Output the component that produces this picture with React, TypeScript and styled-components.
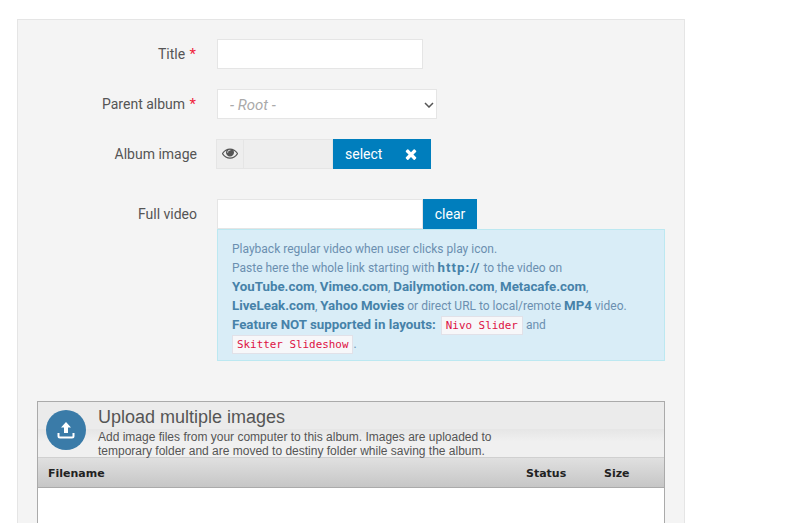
import React from "react";
import styled, { createGlobalStyle } from "styled-components";

const Global = createGlobalStyle`
  html, body {
    margin: 0;
    height: 523px;
    overflow: hidden;
    background: #fff;
  }
  body {
    font-family: Roboto, "Noto Sans", sans-serif;
    font-size: 14px;
    color: #555;
  }
`;

const Panel = styled.form`
  box-sizing: border-box;
  width: 668px;
  height: 504px;
  margin: 19px 0 0 17px;
  padding: 19px 19px 0;
  background: #f4f4f4;
  border: 1px solid #e5e5e5;
  border-bottom: 0;
  overflow: hidden;
`;

const Row = styled.div<{ $gap?: number }>`
  display: grid;
  grid-template-columns: 160px 1fr;
  column-gap: 20px;
  margin-bottom: ${({ $gap }) => $gap ?? 20}px;
`;

const Label = styled.label`
  text-align: right;
  line-height: 30px;
  color: #555;
  white-space: nowrap;
`;

const Required = styled.span`
  margin: 0 1px;
  color: #f0243c;
  font-size: 15px;
  line-height: 0;
`;

const TextInput = styled.input`
  box-sizing: border-box;
  display: block;
  width: 206px;
  height: 30px;
  padding: 0 12px;
  background: #fff;
  border: 1px solid #e5e5e5;
  border-radius: 0;
  outline: none;
`;

const Select = styled.select`
  appearance: none;
  box-sizing: border-box;
  display: block;
  width: 220px;
  height: 30px;
  padding: 1px 12px 0;
  background: #fff url("data:image/svg+xml,%3Csvg xmlns='http://www.w3.org/2000/svg' width='10' height='6'%3E%3Cpath d='M1 1l4 4 4-4' fill='none' stroke='%23555' stroke-width='1.5'/%3E%3C/svg%3E") no-repeat 206px 12px;
  border: 1px solid #e5e5e5;
  border-radius: 0;
  font: italic 15px Roboto, sans-serif;
  color: #aaa;
  outline: none;
`;

const ImageGroup = styled.div`
  display: flex;
  height: 30px;
  margin-left: -1px;
`;

const EyeAddon = styled.span`
  box-sizing: border-box;
  display: flex;
  align-items: center;
  justify-content: center;
  width: 28px;
  padding-bottom: 2px;
  background: #eee;
  border: 1px solid #e5e5e5;
`;

const ImagePath = styled.span`
  box-sizing: border-box;
  width: 89px;
  background: #eee;
  border: 1px solid #e5e5e5;
  border-left: 0;
`;

const BlueButton = styled.button`
  height: 30px;
  padding: 0;
  border: 0;
  border-radius: 0;
  background: #007ebd;
  color: #fff;
  font: 14px Roboto, sans-serif;
`;

const SelectButton = styled(BlueButton)`
  display: flex;
  align-items: center;
  justify-content: space-between;
  width: 98px;
  padding: 0 12px;
`;

const ClearButton = styled(BlueButton)`
  width: 54px;
`;

const InputGroup = styled.div`
  display: flex;
`;

const InfoBox = styled.div`
  box-sizing: border-box;
  width: 448px;
  height: 132px;
  padding: 10px 14px 0;
  background: #d9edf7;
  border: 1px solid #bce8f1;
  color: #6b8fb0;
  font-size: 12px;
  line-height: 19px;
  b {
    color: #4682a9;
    font-size: 13.3px;
    font-weight: 700;
    line-height: 0;
  }
`;

const Protocol = styled.b`
  letter-spacing: 1px;
`;

const Code = styled.code<{ $lead?: number }>`
  margin-left: ${({ $lead }) => $lead ?? 0}px;
  padding: 2px 4px;
  background: #f7f7f9;
  border: 1px solid #e1e1e8;
  color: #dd1144;
  font-family: "DejaVu Sans Mono", monospace;
  font-size: 10.9px;
  line-height: 0;
`;

const Uploader = styled.section`
  box-sizing: border-box;
  width: 628px;
  height: 200px;
  background: #fff;
  border: 1px solid #aaa;
  font-family: "Liberation Sans", Arial, sans-serif;
`;

const UploadHeader = styled.header`
  box-sizing: border-box;
  display: flex;
  gap: 12px;
  height: 56px;
  padding: 8px 8px 0;
  background: linear-gradient(#ebebeb 0, #ebebeb 50%, #e6e6e6 50%, #f0f0f0 72%, #f0f0f0 100%);
  border-bottom: 1px solid #d0d0d0;
`;

const UploadBadge = styled.div`
  flex: none;
  display: flex;
  align-items: center;
  justify-content: center;
  width: 40px;
  height: 40px;
  border-radius: 50%;
  background: #3a7ba8;
`;

const UploadText = styled.div`
  width: 410px;
  margin-top: -5px;
`;

const UploadTitle = styled.div`
  font-size: 18px;
  line-height: 25px;
  color: #555;
`;

const UploadNote = styled.div`
  font-size: 12px;
  line-height: 14px;
  color: #555;
`;

const TableHead = styled.div`
  box-sizing: border-box;
  display: flex;
  align-items: center;
  height: 30px;
  padding: 2px 10px 0;
  background: linear-gradient(#e0e0e0, #c6c6c6);
  border-bottom: 1px solid #aaa;
  font: bold 11px "DejaVu Sans", Verdana, sans-serif;
  color: #222;
`;

const HeadCell = styled.span<{ $width?: number }>`
  flex: ${({ $width }) => ($width ? `0 0 ${$width}px` : "1")};
`;

const EyeIcon = () => (
  <svg width="16" height="16" viewBox="0 0 1792 1792" fill="#555">
    <path d="M1664 960q-152-236-381-353 61 104 61 225 0 185-131.5 316.5t-316.5 131.5-316.5-131.5-131.5-316.5q0-121 61-225-229 117-381 353 133 205 333.5 326.5t434.5 121.5 434.5-121.5 333.5-326.5zm-720-384q0-20-14-34t-34-14q-125 0-214.5 89.5t-89.5 214.5q0 20 14 34t34 14 34-14 14-34q0-86 61-147t147-61q20 0 34-14t14-34zm848 384q0 34-20 69-140 230-376.5 368.5t-499.5 138.5-499.5-139-376.5-368q-20-35-20-69t20-69q140-229 376.5-368t499.5-139 499.5 139 376.5 368q20 35 20 69z" />
  </svg>
);

const TimesIcon = () => (
  <svg width="16" height="16" viewBox="0 0 1792 1792" fill="#fff">
    <path d="M1490 1322q0 40-28 68l-136 136q-28 28-68 28t-68-28l-294-294-294 294q-28 28-68 28t-68-28l-136-136q-28-28-28-68t28-68l294-294-294-294q-28-28-28-68t28-68l136-136q28-28 68-28t68 28l294 294 294-294q28-28 68-28t68 28l136 136q28 28 28 68t-28 68l-294 294 294 294q28 28 28 68z" />
  </svg>
);

const App = () => (
  <>
    <Global />
    <Panel>
      <Row>
        <Label>Title <Required>*</Required></Label>
        <TextInput />
      </Row>
      <Row>
        <Label>Parent album <Required>*</Required></Label>
        <Select>
          <option>- Root -</option>
        </Select>
      </Row>
      <Row $gap={30}>
        <Label>Album image</Label>
        <ImageGroup>
          <EyeAddon><EyeIcon /></EyeAddon>
          <ImagePath />
          <SelectButton type="button">select <TimesIcon /></SelectButton>
        </ImageGroup>
      </Row>
      <Row $gap={40}>
        <Label>Full video</Label>
        <div>
          <InputGroup>
            <TextInput />
            <ClearButton type="button">clear</ClearButton>
          </InputGroup>
          <InfoBox>
            Playback regular video when user clicks play icon.<br />
            Paste here the whole link starting with <Protocol>http://</Protocol> to the video on<br />
            <b>YouTube.com</b>, <b>Vimeo.com</b>, <b>Dailymotion.com</b>, <b>Metacafe.com</b>,<br />
            <b>LiveLeak.com</b>, <b>Yahoo Movies</b> or direct URL to local/remote <b>MP4</b> video.<br />
            <b>Feature NOT supported in layouts:</b> <Code $lead={2}>Nivo Slider</Code> and<br />
            <Code>Skitter Slideshow</Code>.
          </InfoBox>
        </div>
      </Row>
      <Uploader>
        <UploadHeader>
          <UploadBadge>
            <svg width="22" height="22" viewBox="0 0 22 22" fill="none">
              <path d="M11 3 L16 8.5 H13 V14 H9 V8.5 H6 Z" fill="#fff" />
              <path d="M3.5 14 V17 Q3.5 18.5 5 18.5 H17 Q18.5 18.5 18.5 17 V14" stroke="#fff" strokeWidth="2" />
            </svg>
          </UploadBadge>
          <UploadText>
            <UploadTitle>Upload multiple images</UploadTitle>
            <UploadNote>
              Add image files from your computer to this album. Images are uploaded to temporary folder and are moved to destiny folder while saving the album.
            </UploadNote>
          </UploadText>
        </UploadHeader>
        <TableHead>
          <HeadCell>Filename</HeadCell>
          <HeadCell $width={78}>Status</HeadCell>
          <HeadCell $width={50}>Size</HeadCell>
        </TableHead>
      </Uploader>
    </Panel>
  </>
);

export default App;
